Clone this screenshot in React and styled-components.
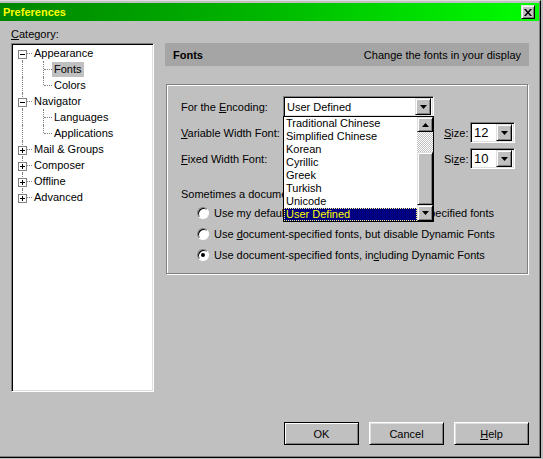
import React from 'react';
import styled, { createGlobalStyle, css } from 'styled-components';

const GlobalStyle = createGlobalStyle`
  html, body {
    margin: 0;
    padding: 0;
    background: #c0c0c0;
  }
  body {
    font-family: "Liberation Sans", Arial, sans-serif;
    font-size: 11px;
    color: #000;
  }
  * {
    box-sizing: border-box;
  }
`;

const raised = css`
  border: 1px solid;
  border-color: #dfdfdf #000 #000 #dfdfdf;
  box-shadow: inset 1px 1px #fff, inset -1px -1px #808080;
  background: #c0c0c0;
`;

const sunken = css`
  border: 1px solid;
  border-color: #808080 #fff #fff #808080;
  box-shadow: inset 1px 1px #000, inset -1px -1px #dfdfdf;
`;

const Window = styled.div`
  width: 541px;
  height: 458px;
  background: #c0c0c0;
  border-top: 1px solid #dfdfdf;
  border-right: 1px solid #000;
  border-bottom: 1px solid #000;
  box-shadow: inset -1px -1px #808080;
  padding-top: 2px;
  display: flex;
  flex-direction: column;
`;

const TitleBar = styled.div`
  height: 18px;
  margin-right: 1px;
  display: flex;
  align-items: center;
  justify-content: space-between;
  padding: 0 4px 0 3px;
  background: linear-gradient(to right, #008400, #00b800 50%, #00ff00);
`;

const Title = styled.span`
  color: #ffff00;
  font-weight: bold;
  font-size: 11px;
`;

const CloseButton = styled.div`
  ${raised};
  width: 14px;
  height: 14px;
  display: flex;
  align-items: center;
  justify-content: center;
`;

const Body = styled.div`
  flex: 1;
  display: flex;
  flex-direction: column;
  padding: 0 11px;
`;

const Main = styled.div`
  display: grid;
  grid-template-columns: 143px 364px;
  grid-template-rows: 22px 349px;
  column-gap: 11px;
`;

const CategoryLabel = styled.div`
  align-self: end;
  line-height: 13px;
  padding-bottom: 2px;
`;

const Tree = styled.div`
  ${sunken};
  background: #fff;
  padding: 1px 0 0 2px;
`;

const TreeRow = styled.div`
  display: flex;
  align-items: center;
  height: 16px;
`;

const Lane = styled.span`
  position: relative;
  flex: none;
  width: ${(p) => p.$w}px;
  height: 16px;

  &::before {
    content: '';
    display: ${(p) => (p.$v ? 'block' : 'none')};
    position: absolute;
    left: ${(p) => p.$x}px;
    top: ${(p) => (p.$v === 'bottom' ? '8px' : '0')};
    bottom: ${(p) => (p.$v === 'top' ? '8px' : '0')};
    border-left: 1px dotted #808080;
  }

  &::after {
    content: '';
    display: ${(p) => (p.$h ? 'block' : 'none')};
    position: absolute;
    left: ${(p) => p.$x + 1}px;
    right: 0;
    top: 8px;
    border-top: 1px dotted #808080;
  }
`;

const Toggle = styled.span`
  position: absolute;
  z-index: 1;
  left: 4px;
  top: 4px;
  width: 9px;
  height: 9px;
  display: block;
  background: #fff;
`;

const NodeLabel = styled.span`
  padding: 1px 2px;
  line-height: 13px;
  background: ${(p) => (p.$selected ? '#c0c0c0' : 'transparent')};
`;

const Panel = styled.div`
  display: flex;
  flex-direction: column;
`;

const PanelHeader = styled.div`
  height: 23px;
  display: flex;
  align-items: center;
  justify-content: space-between;
  padding: 0 8px;
  background: #a5a5a5;
`;

const HeaderTitle = styled.span`
  font-weight: bold;
`;

const GroupBox = styled.div`
  position: relative;
  margin: 18px 1px 0 1px;
  height: 190px;
  border: 1px solid #808080;
  box-shadow: inset 1px 1px #fff, 1px 1px #fff;
  padding: 11px 0 6px 14px;
  display: flex;
  flex-direction: column;
`;

const FieldRow = styled.div`
  display: flex;
  align-items: center;
  height: 21px;
  margin-top: ${(p) => p.$gap || 0}px;
`;

const FieldLabel = styled.span`
  width: 102px;
  flex: none;
`;

const Select = styled.div`
  ${sunken};
  position: relative;
  width: ${(p) => p.$w}px;
  height: 21px;
  background: #fff;
  display: flex;
  align-items: center;
  justify-content: space-between;
  padding: 2px 2px 2px 3px;
  font-size: ${(p) => (p.$big ? '13px' : '11px')};
`;

const ArrowButton = styled.span`
  ${raised};
  width: 16px;
  height: 17px;
  flex: none;
  display: flex;
  align-items: center;
  justify-content: center;
`;

const Spacer = styled.span`
  width: ${(p) => p.$w}px;
  flex: none;
`;

const SizeLabel = styled.span`
  width: 26px;
  margin-left: 10px;
`;

const DropList = styled.div`
  position: absolute;
  z-index: 5;
  top: 100%;
  left: -1px;
  width: 151px;
  height: 106px;
  border: 1px solid #000;
  background: #fff;
  display: flex;
  font-size: 11px;
`;

const ListItems = styled.div`
  flex: 1;
  display: flex;
  flex-direction: column;
`;

const ListItem = styled.div`
  height: 13px;
  line-height: 13px;
  padding-left: 2px;
  white-space: nowrap;
  background: ${(p) => (p.$active ? '#000080' : 'transparent')};
  color: ${(p) => (p.$active ? '#ffff00' : '#000')};
  outline: ${(p) => (p.$active ? '1px dotted #ffff80' : 'none')};
  outline-offset: -1px;
`;

const ScrollBar = styled.div`
  width: 16px;
  display: flex;
  flex-direction: column;
`;

const ScrollButton = styled.div`
  ${raised};
  height: ${(p) => p.$h}px;
  flex: ${(p) => (p.$grow ? 1 : 'none')};
  display: flex;
  align-items: center;
  justify-content: center;
`;

const ScrollTrack = styled.div`
  height: 20px;
  background-image: repeating-conic-gradient(#fff 0 25%, #c0c0c0 0 50%);
  background-size: 2px 2px;
`;

const Note = styled.div`
  margin-top: 19px;
  line-height: 13px;
`;

const RadioRow = styled.div`
  display: flex;
  align-items: center;
  height: 21px;
  padding-left: 16px;
  gap: 5px;
  margin-top: ${(p) => p.$gap || 0}px;
  white-space: nowrap;
`;

const Radio = styled.span`
  position: relative;
  width: 12px;
  height: 12px;
  flex: none;
  border-radius: 50%;
  background: #fff;
  border: 1px solid;
  border-color: #808080 #fff #fff #808080;
  box-shadow: inset 1px 1px #000;

  &::after {
    content: '';
    display: ${(p) => (p.$checked ? 'block' : 'none')};
    position: absolute;
    left: 3px;
    top: 3px;
    width: 4px;
    height: 4px;
    border-radius: 50%;
    background: #000;
  }
`;

const ButtonBar = styled.div`
  display: flex;
  justify-content: flex-end;
  gap: 10px;
  margin-top: 30px;
`;

const Button = styled.div`
  width: 75px;
  height: 23px;
  display: flex;
  align-items: center;
  justify-content: center;
  background: #c0c0c0;
  ${(p) =>
    p.$default
      ? css`
          border: 1px solid #000;
          box-shadow: inset 1px 1px #fff, inset -1px -1px #808080;
        `
      : css`
          border: 1px solid;
          border-color: #fff #000 #000 #fff;
          box-shadow: inset 1px 1px #dfdfdf, inset -1px -1px #808080;
        `}
`;

const DownArrow = () => (
  <svg width="7" height="4" viewBox="0 0 7 4">
    <polygon points="0,0 7,0 3.5,4" fill="#000" />
  </svg>
);

const UpArrow = () => (
  <svg width="7" height="4" viewBox="0 0 7 4">
    <polygon points="0,4 7,4 3.5,0" fill="#000" />
  </svg>
);

const CloseGlyph = () => (
  <svg width="8" height="7" viewBox="0 0 8 7">
    <path d="M0 0h2l2 2.5L6 0h2L5 3.5 8 7H6L4 4.5 2 7H0l3-3.5z" fill="#000" />
  </svg>
);

const ToggleBox = ({ open }) => (
  <Toggle>
    <svg width="9" height="9" viewBox="0 0 9 9">
      <rect x="0.5" y="0.5" width="8" height="8" fill="#fff" stroke="#808080" />
      <rect x="2" y="4" width="5" height="1" fill="#000" />
      {!open && <rect x="4" y="2" width="1" height="5" fill="#000" />}
    </svg>
  </Toggle>
);

const tree = [
  { label: 'Appearance', open: true, v: 'bottom' },
  { label: 'Fonts', child: true, last: false, selected: true },
  { label: 'Colors', child: true, last: true },
  { label: 'Navigator', open: true, v: 'full' },
  { label: 'Languages', child: true, last: false },
  { label: 'Applications', child: true, last: true },
  { label: 'Mail & Groups', open: false, v: 'full' },
  { label: 'Composer', open: false, v: 'full' },
  { label: 'Offline', open: false, v: 'full' },
  { label: 'Advanced', open: false, v: 'top' },
];

const encodings = [
  'Traditional Chinese',
  'Simplified Chinese',
  'Korean',
  'Cyrillic',
  'Greek',
  'Turkish',
  'Unicode',
  'User Defined',
];

export default function App() {
  return (
    <>
      <GlobalStyle />
      <Window>
        <TitleBar>
          <Title>Preferences</Title>
          <CloseButton>
            <CloseGlyph />
          </CloseButton>
        </TitleBar>
        <Body>
          <Main>
            <CategoryLabel>
              <u>C</u>ategory:
            </CategoryLabel>
            <div />
            <Tree>
              {tree.map((n) =>
                n.child ? (
                  <TreeRow key={n.label}>
                    <Lane $w={18} $x={8} $v="full" />
                    <Lane $w={20} $x={11} $v={n.last ? 'top' : 'full'} $h />
                    <NodeLabel $selected={n.selected}>{n.label}</NodeLabel>
                  </TreeRow>
                ) : (
                  <TreeRow key={n.label}>
                    <Lane $w={18} $x={8} $v={n.v} $h>
                      <ToggleBox open={n.open} />
                    </Lane>
                    <NodeLabel>{n.label}</NodeLabel>
                  </TreeRow>
                )
              )}
            </Tree>
            <Panel>
              <PanelHeader>
                <HeaderTitle>Fonts</HeaderTitle>
                <span>Change the fonts in your display</span>
              </PanelHeader>
              <GroupBox>
                <FieldRow>
                  <FieldLabel>
                    For the <u>E</u>ncoding:
                  </FieldLabel>
                  <Select $w={151}>
                    <span>User Defined</span>
                    <ArrowButton>
                      <DownArrow />
                    </ArrowButton>
                    <DropList>
                      <ListItems>
                        {encodings.map((e) => (
                          <ListItem key={e} $active={e === 'User Defined'}>
                            {e}
                          </ListItem>
                        ))}
                      </ListItems>
                      <ScrollBar>
                        <ScrollButton $h={15}>
                          <UpArrow />
                        </ScrollButton>
                        <ScrollTrack />
                        <ScrollButton $grow />
                        <ScrollButton $h={16}>
                          <DownArrow />
                        </ScrollButton>
                      </ScrollBar>
                    </DropList>
                  </Select>
                </FieldRow>
                <FieldRow $gap={5}>
                  <FieldLabel>
                    <u>V</u>ariable Width Font:
                  </FieldLabel>
                  <Spacer $w={151} />
                  <SizeLabel>
                    <u>S</u>ize:
                  </SizeLabel>
                  <Select $w={45} $big>
                    <span>12</span>
                    <ArrowButton>
                      <DownArrow />
                    </ArrowButton>
                  </Select>
                </FieldRow>
                <FieldRow $gap={5}>
                  <FieldLabel>
                    <u>F</u>ixed Width Font:
                  </FieldLabel>
                  <Spacer $w={151} />
                  <SizeLabel>
                    Si<u>z</u>e:
                  </SizeLabel>
                  <Select $w={45} $big>
                    <span>10</span>
                    <ArrowButton>
                      <DownArrow />
                    </ArrowButton>
                  </Select>
                </FieldRow>
                <Note>Sometimes a document will provide its own fonts.</Note>
                <RadioRow $gap={1}>
                  <Radio />
                  <span>Use my default fonts, overriding document-specified fonts</span>
                </RadioRow>
                <RadioRow>
                  <Radio />
                  <span>
                    Use <u>d</u>ocument-specified fonts, but disable Dynamic Fonts
                  </span>
                </RadioRow>
                <RadioRow>
                  <Radio $checked />
                  <span>
                    Use document-specified fonts, in<u>c</u>luding Dynamic Fonts
                  </span>
                </RadioRow>
              </GroupBox>
            </Panel>
          </Main>
          <ButtonBar>
            <Button $default>OK</Button>
            <Button>Cancel</Button>
            <Button>
              <span>
                <u>H</u>elp
              </span>
            </Button>
          </ButtonBar>
        </Body>
      </Window>
    </>
  );
}
